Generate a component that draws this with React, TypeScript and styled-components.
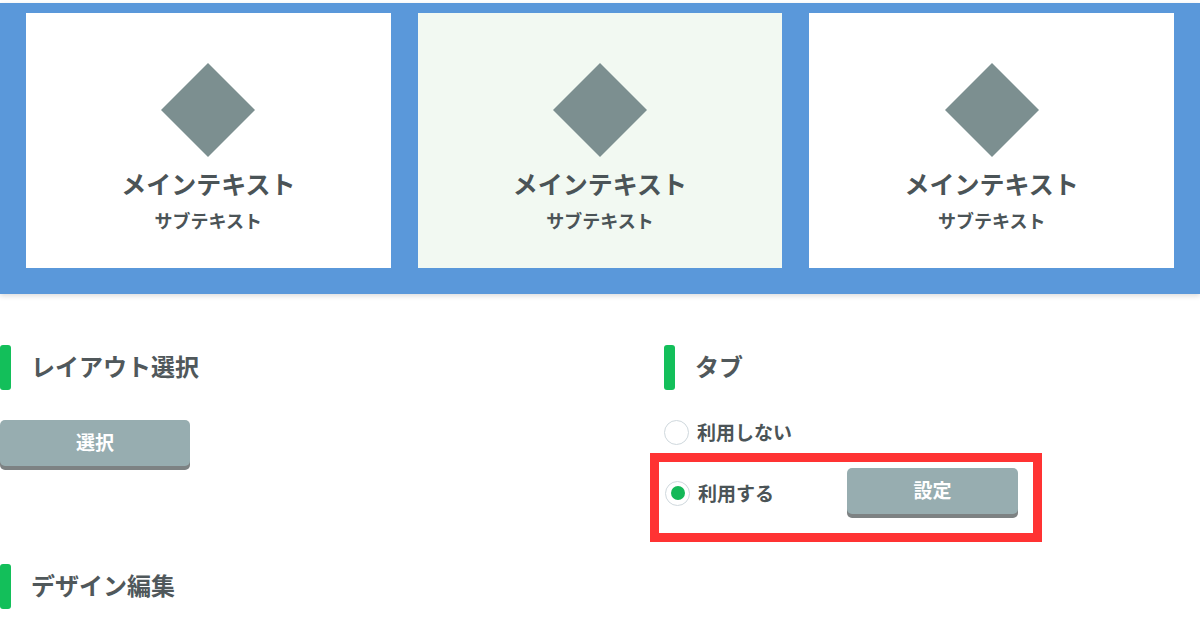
import styled, { createGlobalStyle } from 'styled-components';

const GlobalStyle = createGlobalStyle`
    body {
        margin: 0;
        background: #ffffff;
        font-family: "Noto Sans CJK JP", "Noto Sans", sans-serif;
        color: #4b5457;
    }
`;

const cards = [
    { main: 'メインテキスト', sub: 'サブテキスト', active: false },
    { main: 'メインテキスト', sub: 'サブテキスト', active: true },
    { main: 'メインテキスト', sub: 'サブテキスト', active: false },
];

const Diamond = () => (
    <DiamondIcon width="94" height="94" viewBox="0 0 94 94">
        <polygon points="47,0 94,47 47,94 0,47" fill="#7c8f90" />
    </DiamondIcon>
);

const App = () => {
    return (
        <>
            <GlobalStyle />
            <Hero>
                {cards.map((c, i) => (
                    <Card key={i} $active={c.active}>
                        <Diamond />
                        <MainText>{c.main}</MainText>
                        <SubText>{c.sub}</SubText>
                    </Card>
                ))}
            </Hero>
            <Content>
                <Section>
                    <Heading>
                        <HeadingText>レイアウト選択</HeadingText>
                    </Heading>
                    <Button $width={190}>選択</Button>
                </Section>
                <Section>
                    <Heading>
                        <HeadingText>タブ</HeadingText>
                    </Heading>
                    <RadioList>
                        <RadioRow>
                            <Radio />
                            <RadioLabel>利用しない</RadioLabel>
                        </RadioRow>
                        <Highlight>
                            <RadioRow>
                                <Radio $checked />
                                <RadioLabel>利用する</RadioLabel>
                            </RadioRow>
                            <Button $width={171}>設定</Button>
                        </Highlight>
                    </RadioList>
                </Section>
                <Section>
                    <Heading>
                        <HeadingText>デザイン編集</HeadingText>
                    </Heading>
                </Section>
            </Content>
        </>
    );
};

const Hero = styled.div`
    margin-top: 3px;
    background: #5a98da;
    padding: 10px 26px 26px;
    display: grid;
    grid-template-columns: repeat(3, 1fr);
    column-gap: 27px;
    box-shadow: 0 2px 5px rgba(0, 0, 0, 0.14);
`;

const Card = styled.div<{ $active?: boolean }>`
    height: 255px;
    background: ${(p) => (p.$active ? '#f2f9f2' : '#ffffff')};
    display: flex;
    flex-direction: column;
    align-items: center;
    padding-top: 50px;
    box-sizing: border-box;
`;

const DiamondIcon = styled.svg`
    display: block;
`;

const MainText = styled.div`
    margin-top: 11px;
    font-size: 25px;
    line-height: 30px;
    font-weight: 700;
    color: #4b5457;
`;

const SubText = styled.div`
    margin-top: 9px;
    font-size: 18px;
    line-height: 26px;
    font-weight: 700;
    color: #4b5457;
`;

const Content = styled.div`
    margin-top: 51px;
    display: grid;
    grid-template-columns: 640px 1fr;
    column-gap: 24px;
    row-gap: 22px;
`;

const Section = styled.div`
    display: flex;
    flex-direction: column;
    align-items: flex-start;
    gap: 30px;
`;

const Heading = styled.div`
    display: flex;
    align-items: center;
    height: 45px;
    &::before {
        content: '';
        width: 11px;
        height: 45px;
        border-radius: 3px;
        background: #13bf5a;
        margin-right: 20px;
    }
`;

const HeadingText = styled.span`
    margin-top: -4px;
    font-size: 24px;
    line-height: 1;
    font-weight: 700;
    color: #50585b;
`;

const Button = styled.div<{ $width: number }>`
    width: ${(p) => p.$width}px;
    height: 46px;
    box-sizing: border-box;
    padding-bottom: 4px;
    border-radius: 5px;
    background: #97adb0;
    box-shadow: 0 4px 0 #7d8283;
    color: #ffffff;
    font-size: 19px;
    font-weight: 700;
    display: flex;
    align-items: center;
    justify-content: center;
    margin-bottom: 4px;
    cursor: pointer;
`;

const RadioList = styled.div`
    display: flex;
    flex-direction: column;
    gap: 8px;
`;

const RadioRow = styled.label`
    display: flex;
    align-items: center;
    gap: 8px;
    height: 25px;
`;

const Radio = styled.span<{ $checked?: boolean }>`
    width: 25px;
    height: 25px;
    box-sizing: border-box;
    border-radius: 50%;
    border: 1.5px solid #cfd8dd;
    background: #ffffff;
    display: flex;
    align-items: center;
    justify-content: center;
    &::after {
        content: '';
        display: ${(p) => (p.$checked ? 'block' : 'none')};
        width: 14px;
        height: 14px;
        border-radius: 50%;
        background: #13b857;
    }
`;

const RadioLabel = styled.span`
    margin-top: -2px;
    font-size: 19px;
    font-weight: 700;
    color: #4b5457;
`;

const Highlight = styled.div`
    margin-left: -14px;
    width: 392px;
    box-sizing: border-box;
    border: 9px solid #ff3333;
    padding: 6px 15px 15px 6px;
    display: flex;
    align-items: center;
    > div {
        margin-left: auto;
    }
`;

export default App;
